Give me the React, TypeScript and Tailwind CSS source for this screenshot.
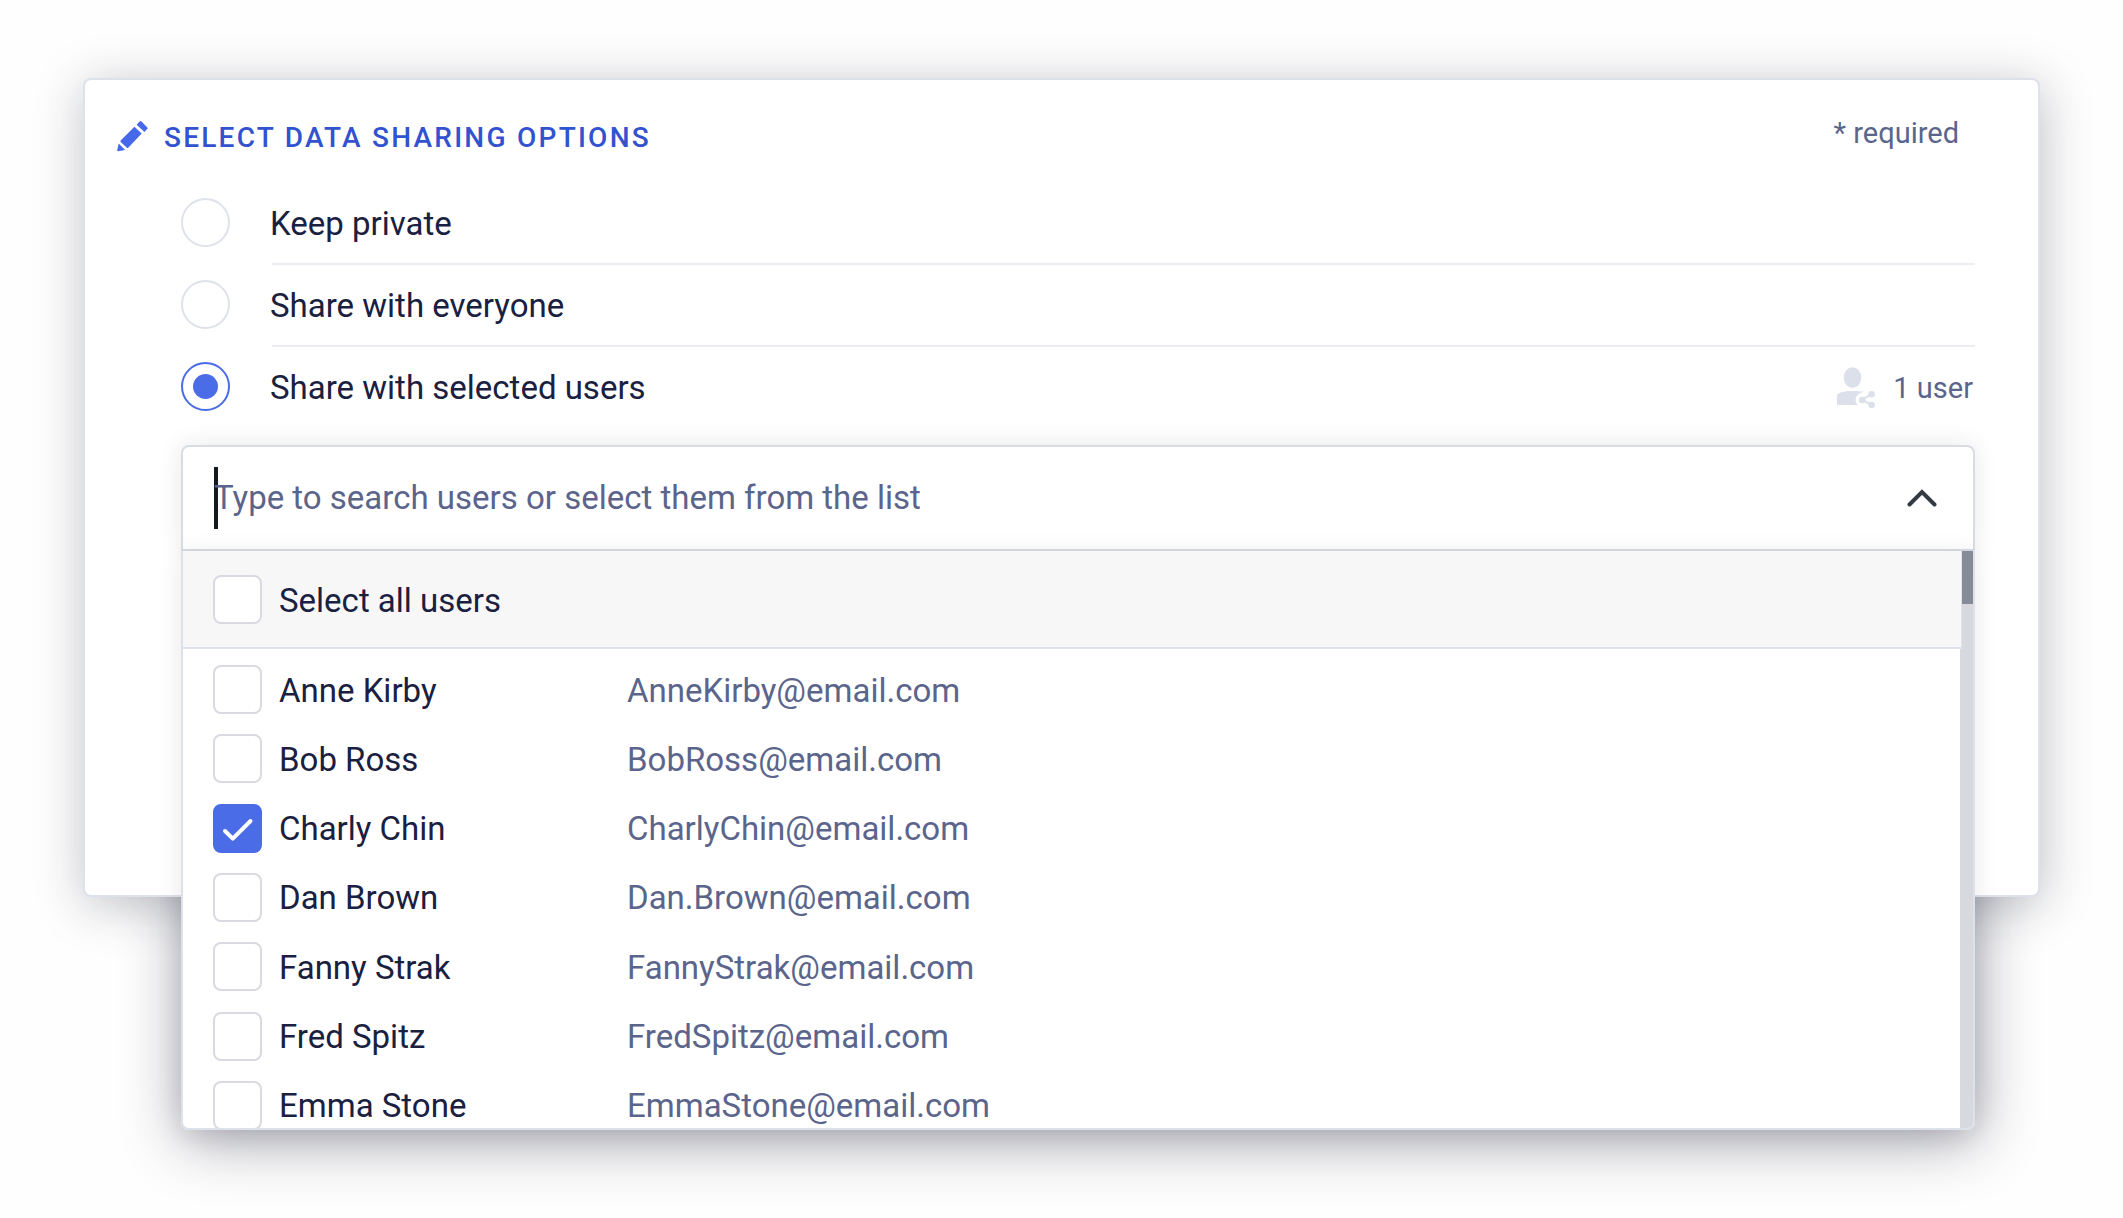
import { useState } from "react";

const options = ["Keep private", "Share with everyone", "Share with selected users"];

const users = [
  { name: "Anne Kirby", email: "AnneKirby@email.com" },
  { name: "Bob Ross", email: "BobRoss@email.com" },
  { name: "Charly Chin", email: "CharlyChin@email.com" },
  { name: "Dan Brown", email: "Dan.Brown@email.com" },
  { name: "Fanny Strak", email: "FannyStrak@email.com" },
  { name: "Fred Spitz", email: "FredSpitz@email.com" },
  { name: "Emma Stone", email: "EmmaStone@email.com" },
];

function PencilIcon() {
  return (
    <svg viewBox="0 0 31 31" className="h-[31px] w-[31px] shrink-0 fill-[#4668ea]" aria-hidden="true">
      <path d="M22.600.5a1.300 1.300 0 0 1 1.900 0l5.600 5.700a1.300 1.300 0 0 1 0 1.900L27.500 11 19.600 3.800z" />
      <path d="M17.400 5.800l7.300 6.700-13.500 14.300a1 1 0 0 1-1.300 0L3.700 20.900a1 1 0 0 1 0-1.300z" />
      <path d="M1.600 22.600l6.500 6.400-7.100 1.200a.700.700 0 0 1-.800-.800z" />
    </svg>
  );
}

function SharedUserIcon() {
  return (
    <svg viewBox="0 0 38 42" className="h-[42px] w-[38px] shrink-0 fill-[#dbe0ea]" aria-hidden="true">
      <ellipse cx="15.500" cy="10.600" rx="8.800" ry="10.300" />
      <path d="M0 38V29C0 25.500 7 24 15 24c5 0 9 .3 12 .8-4.500 1.200-8.400 3.600-8.400 8.200 0 2 .8 3.600 2.200 5z" />
      <path d="M34.600 27.200L25 33l9.600 5" className="fill-none stroke-[#dbe0ea] stroke-2" />
      <circle cx="34.600" cy="27.200" r="3.300" />
      <circle cx="25.200" cy="33" r="3.300" />
      <circle cx="34.600" cy="38" r="3.300" />
    </svg>
  );
}

function Checkbox({ id, checked, onChange }: { id: string; checked: boolean; onChange: () => void }) {
  return (
    <span className="grid h-[49px] w-[49px] shrink-0">
      <input
        id={id}
        type="checkbox"
        checked={checked}
        onChange={onChange}
        className="col-start-1 row-start-1 h-full w-full appearance-none rounded-lg border-2 border-[#d9dae1] bg-white checked:border-[#4a6ce6] checked:bg-[#4a6ce6]"
      />
      {checked && (
        <svg
          viewBox="0 0 49 49"
          className="pointer-events-none col-start-1 row-start-1 h-full w-full fill-none stroke-white stroke-4"
          strokeLinecap="round"
          strokeLinejoin="round"
          aria-hidden="true"
        >
          <path d="M12 27l7.800 7.700L37.500 17" />
        </svg>
      )}
    </span>
  );
}

export default function App() {
  const [option, setOption] = useState(2);
  const [selected, setSelected] = useState<string[]>(["Charly Chin"]);
  const [open, setOpen] = useState(true);
  const [query, setQuery] = useState("");

  const allSelected = selected.length === users.length;
  const toggle = (name: string) =>
    setSelected((s) => (s.includes(name) ? s.filter((n) => n !== name) : [...s, name]));

  return (
    <main className="isolate min-h-screen bg-[#fefefe] px-[83px] pt-[78px] pb-80 font-[Roboto,sans-serif] text-[33px] leading-10 text-[#1a2040]">
      <section className="rounded-lg border-2 border-[#dce1ea] bg-white pr-[63px] pb-[344px] pl-8 shadow-[2px_8px_50px_rgba(26,29,50,0.28)]">
        <header className="flex items-start justify-between pt-[35px] pr-4">
          <h1
            id="sharing-title"
            className="flex items-center gap-4 text-[28px] font-medium tracking-[0.08em] text-[#3352cf]"
          >
            <PencilIcon />
            <span className="pt-[3px]">SELECT DATA SHARING OPTIONS</span>
          </h1>
          <p className="text-[29px] leading-9 text-[#5b658c]">* required</p>
        </header>

        <div className="pt-[25px] pl-16">
          <fieldset aria-labelledby="sharing-title">
            {options.map((label, i) => (
              <div key={label}>
                {i > 0 && <hr className="ml-[91px] border-t-2 border-[#ecedf2]" />}
                <div className="flex items-center justify-between pt-[15px] pb-4">
                  <label className="flex items-center gap-10">
                    <input
                      type="radio"
                      name="sharing"
                      checked={option === i}
                      onChange={() => setOption(i)}
                      className="h-[49px] w-[49px] appearance-none rounded-full border-2 border-[#dfe2ea] bg-white bg-clip-content p-[10px] checked:border-[#4a6ce6] checked:bg-[#4a6ce6]"
                    />
                    <span className="pt-0.5">{label}</span>
                  </label>
                  {i === 2 && (
                    <span className="flex items-center gap-[18px] pt-[3px] pr-0.5 text-[29px] text-[#5b658c]">
                      <SharedUserIcon />
                      {selected.length} {selected.length === 1 ? "user" : "users"}
                    </span>
                  )}
                </div>
              </div>
            ))}
          </fieldset>

          <div className="relative mt-[18px]">
            <div className="flex items-center justify-between rounded-t-lg border-2 border-[#d9dce3] bg-white pr-9 pl-[31px] shadow-[0_0_24px_rgba(26,29,50,0.1)]">
              <span className="h-[62px] w-1 shrink-0 bg-[#14181f]" aria-hidden="true" />
              <input
                type="text"
                aria-label="Search users"
                value={query}
                onChange={(e) => setQuery(e.target.value)}
                placeholder="Type to search users or select them from the list"
                className="-ml-1 h-[102px] min-w-0 grow bg-transparent pb-0.5 outline-none placeholder:text-[#5b658c]"
              />
              <button type="button" aria-label="Toggle user list" aria-expanded={open} onClick={() => setOpen(!open)}>
                <svg
                  viewBox="0 0 30 18"
                  className="h-[18px] w-[30px] fill-none stroke-[#343a45] stroke-4"
                  strokeLinecap="round"
                  aria-hidden="true"
                >
                  <path d="M2.500 15.500L15 3l12.500 12.500" />
                </svg>
              </button>
            </div>

            {open && (
              <div className="absolute inset-x-0 top-full">
                <div className="absolute inset-0 -z-10 rounded-lg shadow-[2px_10px_60px_rgba(26,29,50,0.42)]" />
                <div className="flex h-[579px] overflow-hidden rounded-b-lg border-2 border-t-0 border-[#dce1ea] bg-white shadow-[0_4px_24px_rgba(26,29,50,0.1)]">
                  <div className="min-w-0 grow">
                    <div className="relative -mr-0.5 border-r border-b-2 border-[#dfe3ec] bg-[#f7f7f8] pt-6 pb-[23px] pl-[30px]">
                      <div className="flex items-center gap-[17px]">
                        <Checkbox
                          id="all-users"
                          checked={allSelected}
                          onChange={() => setSelected(allSelected ? [] : users.map((u) => u.name))}
                        />
                        <label htmlFor="all-users" className="pt-0.5">
                          Select all users
                        </label>
                      </div>
                    </div>
                    <ul className="grid h-[491px] auto-rows-fr pt-1.5 pl-[30px]">
                      {users.map((u) => (
                        <li key={u.name} className="flex items-center">
                          <Checkbox id={u.email} checked={selected.includes(u.name)} onChange={() => toggle(u.name)} />
                          <label htmlFor={u.email} className="ml-[17px] flex grow items-center pt-0.5">
                            <span className="w-[348px]">{u.name}</span>
                            <span className="text-[#5b658c]">{u.email}</span>
                          </label>
                        </li>
                      ))}
                    </ul>
                  </div>
                  <div className="flex w-[13px] shrink-0 justify-end bg-[#d8d9df]" aria-hidden="true">
                    <div className="h-[53px] w-[11px] bg-[#868b97]" />
                  </div>
                </div>
              </div>
            )}
          </div>
        </div>
      </section>
    </main>
  );
}
